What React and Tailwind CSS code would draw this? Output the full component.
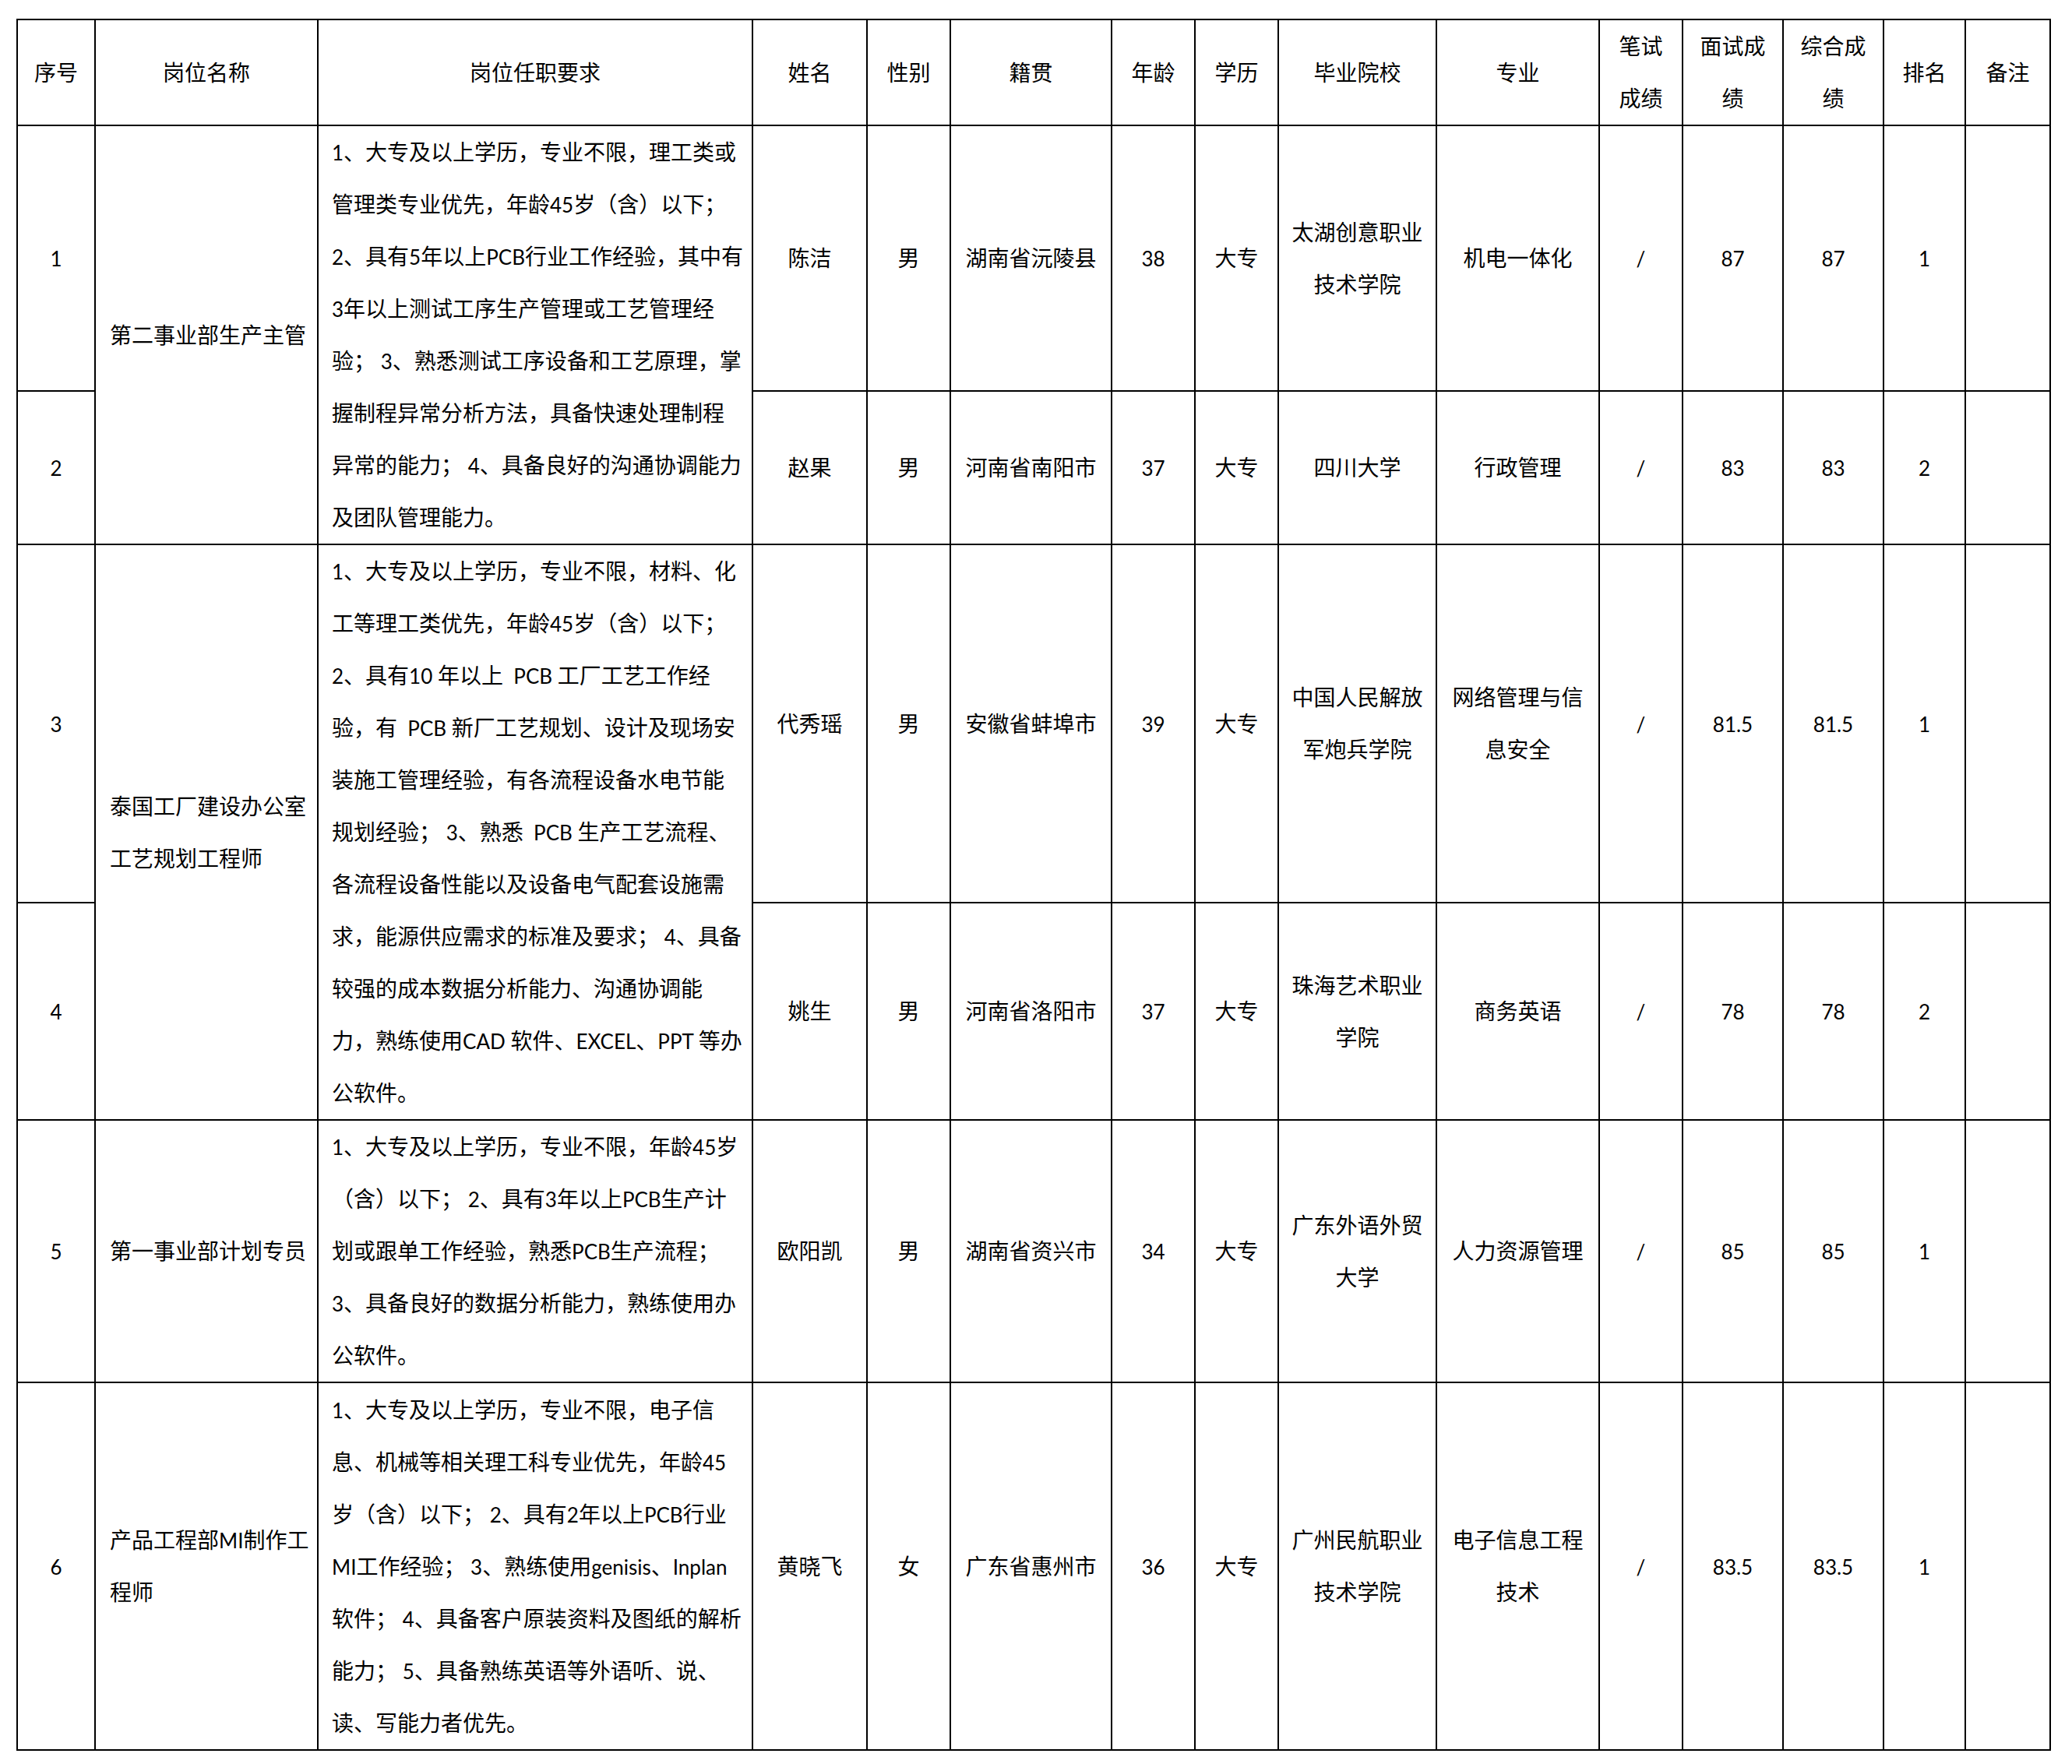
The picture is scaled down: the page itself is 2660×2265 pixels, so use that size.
import React from "react";

const reqA = [
  "1、大专及以上学历，专业不限，理工类或",
  "管理类专业优先，年龄45岁（含）以下；",
  "2、具有5年以上PCB行业工作经验，其中有",
  "3年以上测试工序生产管理或工艺管理经",
  "验； 3、熟悉测试工序设备和工艺原理，掌",
  "握制程异常分析方法，具备快速处理制程",
  "异常的能力； 4、具备良好的沟通协调能力",
  "及团队管理能力。",
];
const reqB = [
  "1、大专及以上学历，专业不限，材料、化",
  "工等理工类优先，年龄45岁（含）以下；",
  "2、具有10 年以上  PCB 工厂工艺工作经",
  "验，有  PCB 新厂工艺规划、设计及现场安",
  "装施工管理经验，有各流程设备水电节能",
  "规划经验； 3、熟悉  PCB 生产工艺流程、",
  "各流程设备性能以及设备电气配套设施需",
  "求，能源供应需求的标准及要求； 4、具备",
  "较强的成本数据分析能力、沟通协调能",
  "力，熟练使用CAD 软件、EXCEL、PPT 等办",
  "公软件。",
];
const reqC = [
  "1、大专及以上学历，专业不限，年龄45岁",
  "（含）以下； 2、具有3年以上PCB生产计",
  "划或跟单工作经验，熟悉PCB生产流程；",
  "3、具备良好的数据分析能力，熟练使用办",
  "公软件。",
];
const reqD = [
  "1、大专及以上学历，专业不限，电子信",
  "息、机械等相关理工科专业优先，年龄45",
  "岁（含）以下； 2、具有2年以上PCB行业",
  "MI工作经验； 3、熟练使用genisis、Inplan",
  "软件； 4、具备客户原装资料及图纸的解析",
  "能力； 5、具备熟练英语等外语听、说、",
  "读、写能力者优先。",
];

const cell = "border-2 border-black p-0 align-middle text-center";
const left = "border-2 border-black p-0 pl-[18px] align-middle text-left";
const reqCell = "border-2 border-black p-0 pl-[17px] align-middle text-left";

function T({ s }) {
  if (typeof s !== "string") return s;
  const parts = s.split(/([A-Za-z0-9./ ]+)/);
  return parts.map((p, i) =>
    /[A-Za-z0-9./]/.test(p) ? (
      <span key={i} className="text-[26px] leading-none">
        {p}
      </span>
    ) : (
      <React.Fragment key={i}>{p}</React.Fragment>
    )
  );
}

function Lines({ lines }) {
  return lines.map((l, i) => (
    <div key={i} className="whitespace-pre h-[67px]">
      <T s={l} />
    </div>
  ));
}

function Multi({ a, b }) {
  return (
    <>
      <div className="h-[67px]">
        <T s={a} />
      </div>
      <div className="h-[67px]">{b}</div>
    </>
  );
}

function Cells({ vals }) {
  return vals.map((v, i) => (
    <td key={i} className={cell}>
      <T s={v} />
    </td>
  ));
}

export default function App() {
  return (
    <div className="w-[2660px] min-h-[2265px] bg-white pt-[24px] pl-[21px] text-black font-['Lato','Noto_Sans_CJK_SC',sans-serif] text-[28px] leading-[67px] font-normal">
      <table className="table-fixed border-collapse w-[2612px]">
        <colgroup>
          <col className="w-[100px]" />
          <col className="w-[286px]" />
          <col className="w-[558px]" />
          <col className="w-[147px]" />
          <col className="w-[107px]" />
          <col className="w-[207px]" />
          <col className="w-[107px]" />
          <col className="w-[107px]" />
          <col className="w-[203px]" />
          <col className="w-[209px]" />
          <col className="w-[107px]" />
          <col className="w-[129px]" />
          <col className="w-[129px]" />
          <col className="w-[105px]" />
          <col className="w-[109px]" />
        </colgroup>
        <tbody>
          <tr className="h-[136px]">
            <td className={cell}>序号</td>
            <td className={cell}>岗位名称</td>
            <td className={cell}>岗位任职要求</td>
            <td className={cell}>姓名</td>
            <td className={cell}>性别</td>
            <td className={cell}>籍贯</td>
            <td className={cell}>年龄</td>
            <td className={cell}>学历</td>
            <td className={cell}>毕业院校</td>
            <td className={cell}>专业</td>
            <td className={cell}>
              <Multi a="笔试" b="成绩" />
            </td>
            <td className={cell}>
              <Multi a="面试成" b="绩" />
            </td>
            <td className={cell}>
              <Multi a="综合成" b="绩" />
            </td>
            <td className={cell}>排名</td>
            <td className={cell}>备注</td>
          </tr>

          <tr className="h-[341px]">
            <td className={cell}>
              <T s="1" />
            </td>
            <td rowSpan={2} className={left}>
              第二事业部生产主管
            </td>
            <td rowSpan={2} className={reqCell}>
              <Lines lines={reqA} />
            </td>
            <Cells
              vals={[
                "陈洁",
                "男",
                "湖南省沅陵县",
                "38",
                "大专",
                <Multi key="s" a="太湖创意职业" b="技术学院" />,
                "机电一体化",
                "/",
                "87",
                "87",
                "1",
                "",
              ]}
            />
          </tr>
          <tr className="h-[197px]">
            <td className={cell}>
              <T s="2" />
            </td>
            <Cells vals={["赵果", "男", "河南省南阳市", "37", "大专", "四川大学", "行政管理", "/", "83", "83", "2", ""]} />
          </tr>

          <tr className="h-[460px]">
            <td className={cell}>
              <T s="3" />
            </td>
            <td rowSpan={2} className={left}>
              <div>泰国工厂建设办公室</div>
              <div>工艺规划工程师</div>
            </td>
            <td rowSpan={2} className={reqCell}>
              <Lines lines={reqB} />
            </td>
            <Cells
              vals={[
                "代秀瑶",
                "男",
                "安徽省蚌埠市",
                "39",
                "大专",
                <Multi key="s" a="中国人民解放" b="军炮兵学院" />,
                <Multi key="m" a="网络管理与信" b="息安全" />,
                "/",
                "81.5",
                "81.5",
                "1",
                "",
              ]}
            />
          </tr>
          <tr className="h-[279px]">
            <td className={cell}>
              <T s="4" />
            </td>
            <Cells
              vals={[
                "姚生",
                "男",
                "河南省洛阳市",
                "37",
                "大专",
                <Multi key="s" a="珠海艺术职业" b="学院" />,
                "商务英语",
                "/",
                "78",
                "78",
                "2",
                "",
              ]}
            />
          </tr>

          <tr className="h-[335px]">
            <td className={cell}>
              <T s="5" />
            </td>
            <td className={left}>第一事业部计划专员</td>
            <td className={reqCell}>
              <Lines lines={reqC} />
            </td>
            <Cells
              vals={[
                "欧阳凯",
                "男",
                "湖南省资兴市",
                "34",
                "大专",
                <Multi key="s" a="广东外语外贸" b="大学" />,
                "人力资源管理",
                "/",
                "85",
                "85",
                "1",
                "",
              ]}
            />
          </tr>

          <tr className="h-[472px]">
            <td className={cell}>
              <T s="6" />
            </td>
            <td className={left}>
              <div className="h-[67px]">
                <T s="产品工程部MI制作工" />
              </div>
              <div className="h-[67px]">程师</div>
            </td>
            <td className={reqCell}>
              <Lines lines={reqD} />
            </td>
            <Cells
              vals={[
                "黄晓飞",
                "女",
                "广东省惠州市",
                "36",
                "大专",
                <Multi key="s" a="广州民航职业" b="技术学院" />,
                <Multi key="m" a="电子信息工程" b="技术" />,
                "/",
                "83.5",
                "83.5",
                "1",
                "",
              ]}
            />
          </tr>
        </tbody>
      </table>
    </div>
  );
}
